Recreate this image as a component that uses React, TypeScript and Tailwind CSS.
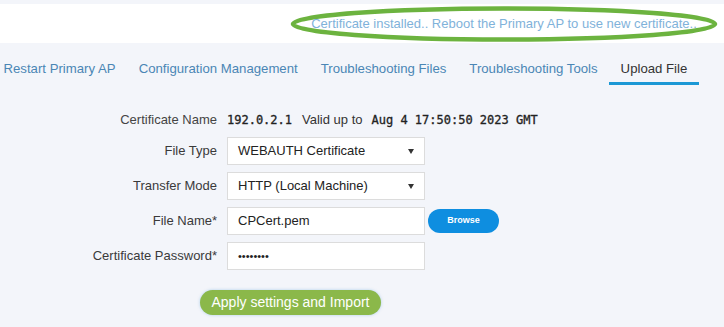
import React from "react";

const tabs = [
  "Restart Primary AP",
  "Configuration Management",
  "Troubleshooting Files",
  "Troubleshooting Tools",
  "Upload File",
];

function Caret() {
  return (
    <svg width="6" height="5" viewBox="0 0 6 5" className="ml-auto">
      <path d="M0 0h6L3 5z" fill="#333" />
    </svg>
  );
}

function Row({ label, children }: { label: string; children: React.ReactNode }) {
  return (
    <div className="flex h-[28px] items-center">
      <div className="w-[217px] shrink-0 text-right text-[13px] text-[#3a3a3a]">{label}</div>
      <div className="ml-[10px] flex items-center">{children}</div>
    </div>
  );
}

const mono = { fontFamily: '"DejaVu Sans Mono", monospace', WebkitTextStroke: "0.3px #222" };

export default function App() {
  return (
    <div
      className="h-[327px] w-[724px] overflow-hidden bg-[#f3f5fa]"
      style={{ fontFamily: '"Liberation Sans", Arial, sans-serif' }}
    >
      {/* notice band */}
      <div className="mt-[4px] flex h-[39px] items-center bg-white">
        <div className="relative ml-[290px] flex h-[36px] w-[428px] items-center justify-center">
          <svg className="absolute inset-0" width="428" height="36" viewBox="0 0 428 36">
            <ellipse cx="214" cy="18" rx="211" ry="15.5" fill="none" stroke="#6cb33f" strokeWidth="4.5" />
          </svg>
          <span className="relative text-[13px] text-[#7fb2da]">
            Certificate installed.. Reboot the Primary AP to use new certificate..
          </span>
        </div>
      </div>

      {/* tabs */}
      <div className="ml-[-8px] mt-[10px] flex">
        {tabs.map((t) => {
          const active = t === "Upload File";
          return (
            <div
              key={t}
              className={`px-[11.5px] pb-[5px] pt-[8px] text-[13.2px] leading-[16px] border-b-[3px] ${
                active ? "border-[#1b98d5] text-[#333]" : "border-transparent text-[#4a86b5]"
              }`}
            >
              {t}
            </div>
          );
        })}
      </div>

      {/* form */}
      <div className="mt-[25px]">
        <div className="flex h-[20px] items-center">
          <div className="w-[217px] shrink-0 text-right text-[13px] text-[#444]">Certificate Name</div>
          <div className="ml-[10px] flex items-center text-[13px] text-[#333]">
            <span className="text-[12px] text-[#222]" style={mono}>
              192.0.2.1
            </span>
            <span className="ml-[10px]">Valid up to</span>
            <span className="ml-[9px] text-[12px] text-[#222]" style={mono}>
              Aug 4 17:50:50 2023 GMT
            </span>
          </div>
        </div>

        <div className="mt-[7px] flex flex-col gap-[7px]">
          <Row label="File Type">
            <div className="flex h-[28px] w-[198px] items-center border border-[#dcdcdc] bg-white pl-[10px] pr-[10px] text-[13px] text-[#222]">
              WEBAUTH Certificate
              <Caret />
            </div>
          </Row>
          <Row label="Transfer Mode">
            <div className="flex h-[28px] w-[198px] items-center border border-[#dcdcdc] bg-white pl-[10px] pr-[10px] text-[13px] text-[#222]">
              HTTP (Local Machine)
              <Caret />
            </div>
          </Row>
          <Row label="File Name*">
            <div className="flex h-[28px] w-[198px] items-center border border-[#dcdcdc] bg-white pl-[10px] text-[13px] text-[#222]">
              CPCert.pem
            </div>
            <button className="ml-[3px] flex h-[24px] w-[71px] items-center justify-center rounded-full bg-[#0e8ee0] text-[9px] font-bold text-white">
              Browse
            </button>
          </Row>
          <Row label="Certificate Password*">
            <div className="flex h-[28px] w-[198px] items-center border border-[#dcdcdc] bg-white pl-[10px] text-[11px] text-[#222]">
              ••••••••
            </div>
          </Row>
        </div>

        <button className="ml-[200px] mt-[20px] flex h-[25px] w-[181px] items-center justify-center rounded-full bg-[#8bb84a] text-[14px] text-white shadow-[0_0_3px_rgba(100,170,220,0.5)]">
          Apply settings and Import
        </button>
      </div>
    </div>
  );
}
